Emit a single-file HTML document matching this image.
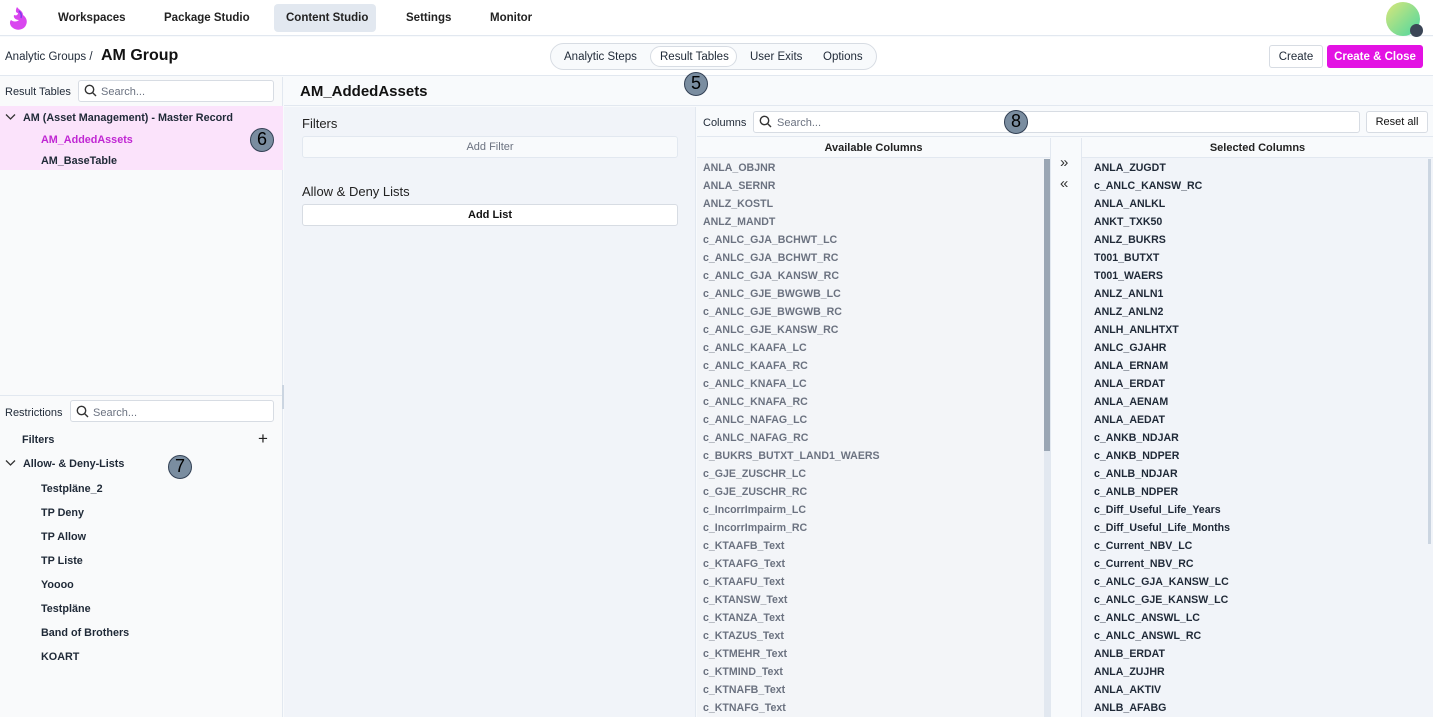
<!DOCTYPE html>
<html><head><meta charset="utf-8"><style>
*{box-sizing:border-box;margin:0;padding:0}
body{width:1433px;height:717px;overflow:hidden;font-family:"Liberation Sans",sans-serif;font-size:11px;color:#1f2937;background:#f8fafc;position:relative}
.a{position:absolute}
.nav{font-size:11.5px;font-weight:bold;color:#222}
.inp{background:#fff;border:1px solid #d7dce3;border-radius:3px}
.ph{color:#6b7280;font-size:11px}
.badge{position:absolute;width:24px;height:24px;border-radius:50%;background:#7a8da0;border:1.5px solid #334155;color:#000;font-size:18px;text-align:center;line-height:21px}
.row{position:absolute;left:6px;font-size:10.6px;font-weight:bold;line-height:18px}
.av{color:#6b7280}
.sel{color:#1f2937}
.tree{position:absolute;font-size:10.8px;font-weight:bold;color:#1f2937}
</style></head><body>
<!-- top nav -->
<div class="a" style="left:0;top:0;width:1433px;height:36px;background:#fff;border-bottom:1px solid #e2e8f0"></div>
<svg class="a" style="left:7px;top:5px" width="22" height="27" viewBox="0 0 22 27"><path d="M10 2c2 3 6 4 6 8 3 2 5 6 3 10-2 5-9 6-13 3-3-2-4-6-2-8 2 2 6 2 8 0-3 0-6-2-5-5 2 1 4 0 4-2-2 0-3-2-1-6z" fill="#d946ef"/><path d="M12 6c2 2 3 4 2 7" stroke="#7c3aed" stroke-width="1.5" fill="none"/></svg>
<div class="a nav" style="left:58px;top:12px">Workspaces</div>
<div class="a nav" style="left:164px;top:12px">Package Studio</div>
<div class="a" style="left:274px;top:4px;width:102px;height:28px;background:#e2e8f0;border-radius:4px"></div>
<div class="a nav" style="left:286px;top:12px">Content Studio</div>
<div class="a nav" style="left:406px;top:12px">Settings</div>
<div class="a nav" style="left:490px;top:12px">Monitor</div>
<div class="a" style="left:1386px;top:2px;width:34px;height:34px;border-radius:50%;background:linear-gradient(135deg,#d9e77a,#4cd6a0)"></div>
<div class="a" style="left:1410px;top:24px;width:13px;height:13px;border-radius:50%;background:#3b4556"></div>
<!-- toolbar -->
<div class="a" style="left:0;top:37px;width:1433px;height:39px;background:#fff;border-bottom:1px solid #e2e8f0"></div>
<div class="a" style="left:5px;top:51px;font-size:11.5px">Analytic Groups /</div>
<div class="a" style="left:101px;top:47px;font-size:16px;font-weight:bold;color:#111">AM Group</div>
<div class="a" style="left:550px;top:43px;width:327px;height:27px;border:1px solid #d7dce3;border-radius:14px;background:#f8fafc"></div>
<div class="a" style="left:650px;top:46px;width:87px;height:21px;border:1px solid #d7dce3;border-radius:11px;background:#fff"></div>
<div class="a" style="left:564px;top:51px;font-size:11.5px">Analytic Steps</div>
<div class="a" style="left:660px;top:51px;font-size:11.5px">Result Tables</div>
<div class="a" style="left:750px;top:51px;font-size:11.5px">User Exits</div>
<div class="a" style="left:823px;top:51px;font-size:11.5px">Options</div>
<div class="a" style="left:1269px;top:45px;width:54px;height:23px;border:1px solid #d7dce3;border-radius:3px;background:#fff;font-size:11.5px;text-align:center;line-height:22px">Create</div>
<div class="a" style="left:1327px;top:45px;width:96px;height:23px;border-radius:3px;background:#e312e3;color:#fff;font-size:11.5px;font-weight:bold;text-align:center;line-height:24px">Create &amp; Close</div>
<!-- left panel -->
<div class="a" style="left:0;top:77px;width:283px;height:640px;background:#f9fafb;border-right:1px solid #e2e8f0"></div>
<div class="a" style="left:5px;top:86px;font-size:11px">Result Tables</div>
<div class="a inp" style="left:78px;top:80px;width:196px;height:22px"></div>
<svg class="a" style="left:84px;top:84px" width="13" height="13" viewBox="0 0 13 13"><circle cx="5.5" cy="5.5" r="4.2" stroke="#333" stroke-width="1.4" fill="none"/><path d="M8.6 8.6L12 12" stroke="#333" stroke-width="1.4"/></svg>
<div class="a ph" style="left:101px;top:86px">Search...</div>
<div class="a" style="left:0;top:106px;width:283px;height:64px;background:#fbe3fb"></div>
<svg class="a" style="left:5px;top:113px" width="11" height="8" viewBox="0 0 11 8"><path d="M1 1.5l4.5 4.5 4.5-4.5" stroke="#333" stroke-width="1.3" fill="none"/></svg>
<div class="tree" style="left:23px;top:112px">AM (Asset Management) - Master Record</div>
<div class="tree" style="left:41px;top:134px;color:#c026d3">AM_AddedAssets</div>
<div class="tree" style="left:41px;top:155px">AM_BaseTable</div>
<div class="badge" style="left:250px;top:128px">6</div>
<div class="a" style="left:0;top:395px;width:283px;height:1px;background:#e2e8f0"></div>
<div class="a" style="left:282px;top:385px;width:3px;height:24px;background:#cbd5e1"></div>
<div class="a" style="left:5px;top:407px">Restrictions</div>
<div class="a inp" style="left:70px;top:400px;width:204px;height:22px"></div>
<svg class="a" style="left:76px;top:405px" width="13" height="13" viewBox="0 0 13 13"><circle cx="5.5" cy="5.5" r="4.2" stroke="#333" stroke-width="1.4" fill="none"/><path d="M8.6 8.6L12 12" stroke="#333" stroke-width="1.4"/></svg>
<div class="a ph" style="left:93px;top:407px">Search...</div>
<div class="tree" style="left:22px;top:434px">Filters</div>
<div class="a" style="left:258px;top:429px;font-size:17px;color:#222">+</div>
<svg class="a" style="left:5px;top:459px" width="11" height="8" viewBox="0 0 11 8"><path d="M1 1.5l4.5 4.5 4.5-4.5" stroke="#333" stroke-width="1.3" fill="none"/></svg>
<div class="tree" style="left:23px;top:458px">Allow- &amp; Deny-Lists</div>
<div class="badge" style="left:168px;top:455px">7</div>
<div class="tree" style="left:41px;top:483px">Testpläne_2</div>
<div class="tree" style="left:41px;top:507px">TP Deny</div>
<div class="tree" style="left:41px;top:531px">TP Allow</div>
<div class="tree" style="left:41px;top:555px">TP Liste</div>
<div class="tree" style="left:41px;top:579px">Yoooo</div>
<div class="tree" style="left:41px;top:603px">Testpläne</div>
<div class="tree" style="left:41px;top:627px">Band of Brothers</div>
<div class="tree" style="left:41px;top:651px">KOART</div>
<!-- title -->
<div class="a" style="left:284px;top:77px;width:1149px;height:29px;background:#f8fafc;border-bottom:1px solid #e2e8f0"></div>
<div class="a" style="left:300px;top:83px;font-size:15px;font-weight:bold;color:#111">AM_AddedAssets</div>
<div class="badge" style="left:684px;top:72px">5</div>
<!-- filters panel -->
<div class="a" style="left:284px;top:107px;width:412px;height:610px;background:#f1f4f9;border-right:1px solid #e2e8f0"></div>
<div class="a" style="left:302px;top:116px;font-size:13px;color:#222">Filters</div>
<div class="a" style="left:302px;top:136px;width:376px;height:22px;border:1px solid #e2e8f0;border-radius:3px;background:#f8fafc;color:#6b7280;text-align:center;line-height:21px">Add Filter</div>
<div class="a" style="left:302px;top:184px;font-size:13px;color:#222">Allow &amp; Deny Lists</div>
<div class="a" style="left:302px;top:204px;width:376px;height:22px;border:1px solid #d7dce3;border-radius:3px;background:#fff;color:#111;font-weight:bold;text-align:center;line-height:21px">Add List</div>
<!-- columns panel -->
<div class="a" style="left:697px;top:107px;width:736px;height:30px;background:#f8fafc;border-bottom:1px solid #e2e8f0"></div>
<div class="a" style="left:703px;top:117px">Columns</div>
<div class="a inp" style="left:753px;top:111px;width:607px;height:22px"></div>
<svg class="a" style="left:759px;top:115px" width="13" height="13" viewBox="0 0 13 13"><circle cx="5.5" cy="5.5" r="4.2" stroke="#333" stroke-width="1.4" fill="none"/><path d="M8.6 8.6L12 12" stroke="#333" stroke-width="1.4"/></svg>
<div class="a ph" style="left:777px;top:117px">Search...</div>
<div class="badge" style="left:1004px;top:110px">8</div>
<div class="a inp" style="left:1366px;top:111px;width:62px;height:22px;text-align:center;line-height:21px;color:#111">Reset all</div>
<div class="a" style="left:697px;top:138px;width:353px;height:579px;background:#f3f5f8"></div>
<div class="a" style="left:697px;top:138px;width:353px;height:20px;background:#f8fafc;border-bottom:1px solid #e2e8f0;text-align:center;line-height:21px;font-weight:bold;color:#222">Available Columns</div>
<div class="a" style="left:1044px;top:159px;width:6px;height:558px;background:#e2e8f0"></div>
<div class="a" style="left:1044px;top:159px;width:6px;height:292px;background:#9aa6b4"></div>
<div class="a" style="left:1050px;top:138px;width:32px;height:579px;background:#f8fafc;border-left:1px solid #e2e8f0;border-right:1px solid #e2e8f0"></div>
<div class="a" style="left:1060px;top:154px;font-size:15px;color:#333">»</div>
<div class="a" style="left:1060px;top:175px;font-size:15px;color:#333">«</div>
<div class="a" style="left:1082px;top:138px;width:351px;height:579px;background:#f1f4f9"></div>
<div class="a" style="left:1082px;top:138px;width:351px;height:20px;background:#f8fafc;border-bottom:1px solid #e2e8f0;text-align:center;line-height:21px;font-weight:bold;color:#222">Selected Columns</div>
<div class="a" style="left:1428px;top:159px;width:3px;height:385px;background:#cbd5e1"></div>
<div class="a" style="left:697px;top:159px;width:340px">
<div class="row av" style="top:0">ANLA_OBJNR</div><div class="row av" style="top:18px">ANLA_SERNR</div><div class="row av" style="top:36px">ANLZ_KOSTL</div><div class="row av" style="top:54px">ANLZ_MANDT</div><div class="row av" style="top:72px">c_ANLC_GJA_BCHWT_LC</div><div class="row av" style="top:90px">c_ANLC_GJA_BCHWT_RC</div><div class="row av" style="top:108px">c_ANLC_GJA_KANSW_RC</div><div class="row av" style="top:126px">c_ANLC_GJE_BWGWB_LC</div><div class="row av" style="top:144px">c_ANLC_GJE_BWGWB_RC</div><div class="row av" style="top:162px">c_ANLC_GJE_KANSW_RC</div><div class="row av" style="top:180px">c_ANLC_KAAFA_LC</div><div class="row av" style="top:198px">c_ANLC_KAAFA_RC</div><div class="row av" style="top:216px">c_ANLC_KNAFA_LC</div><div class="row av" style="top:234px">c_ANLC_KNAFA_RC</div><div class="row av" style="top:252px">c_ANLC_NAFAG_LC</div><div class="row av" style="top:270px">c_ANLC_NAFAG_RC</div><div class="row av" style="top:288px">c_BUKRS_BUTXT_LAND1_WAERS</div><div class="row av" style="top:306px">c_GJE_ZUSCHR_LC</div><div class="row av" style="top:324px">c_GJE_ZUSCHR_RC</div><div class="row av" style="top:342px">c_IncorrImpairm_LC</div><div class="row av" style="top:360px">c_IncorrImpairm_RC</div><div class="row av" style="top:378px">c_KTAAFB_Text</div><div class="row av" style="top:396px">c_KTAAFG_Text</div><div class="row av" style="top:414px">c_KTAAFU_Text</div><div class="row av" style="top:432px">c_KTANSW_Text</div><div class="row av" style="top:450px">c_KTANZA_Text</div><div class="row av" style="top:468px">c_KTAZUS_Text</div><div class="row av" style="top:486px">c_KTMEHR_Text</div><div class="row av" style="top:504px">c_KTMIND_Text</div><div class="row av" style="top:522px">c_KTNAFB_Text</div><div class="row av" style="top:540px">c_KTNAFG_Text</div>
</div>
<div class="a" style="left:1088px;top:159px;width:330px">
<div class="row sel" style="top:0">ANLA_ZUGDT</div><div class="row sel" style="top:18px">c_ANLC_KANSW_RC</div><div class="row sel" style="top:36px">ANLA_ANLKL</div><div class="row sel" style="top:54px">ANKT_TXK50</div><div class="row sel" style="top:72px">ANLZ_BUKRS</div><div class="row sel" style="top:90px">T001_BUTXT</div><div class="row sel" style="top:108px">T001_WAERS</div><div class="row sel" style="top:126px">ANLZ_ANLN1</div><div class="row sel" style="top:144px">ANLZ_ANLN2</div><div class="row sel" style="top:162px">ANLH_ANLHTXT</div><div class="row sel" style="top:180px">ANLC_GJAHR</div><div class="row sel" style="top:198px">ANLA_ERNAM</div><div class="row sel" style="top:216px">ANLA_ERDAT</div><div class="row sel" style="top:234px">ANLA_AENAM</div><div class="row sel" style="top:252px">ANLA_AEDAT</div><div class="row sel" style="top:270px">c_ANKB_NDJAR</div><div class="row sel" style="top:288px">c_ANKB_NDPER</div><div class="row sel" style="top:306px">c_ANLB_NDJAR</div><div class="row sel" style="top:324px">c_ANLB_NDPER</div><div class="row sel" style="top:342px">c_Diff_Useful_Life_Years</div><div class="row sel" style="top:360px">c_Diff_Useful_Life_Months</div><div class="row sel" style="top:378px">c_Current_NBV_LC</div><div class="row sel" style="top:396px">c_Current_NBV_RC</div><div class="row sel" style="top:414px">c_ANLC_GJA_KANSW_LC</div><div class="row sel" style="top:432px">c_ANLC_GJE_KANSW_LC</div><div class="row sel" style="top:450px">c_ANLC_ANSWL_LC</div><div class="row sel" style="top:468px">c_ANLC_ANSWL_RC</div><div class="row sel" style="top:486px">ANLB_ERDAT</div><div class="row sel" style="top:504px">ANLA_ZUJHR</div><div class="row sel" style="top:522px">ANLA_AKTIV</div><div class="row sel" style="top:540px">ANLB_AFABG</div>
</div>
</body></html>
